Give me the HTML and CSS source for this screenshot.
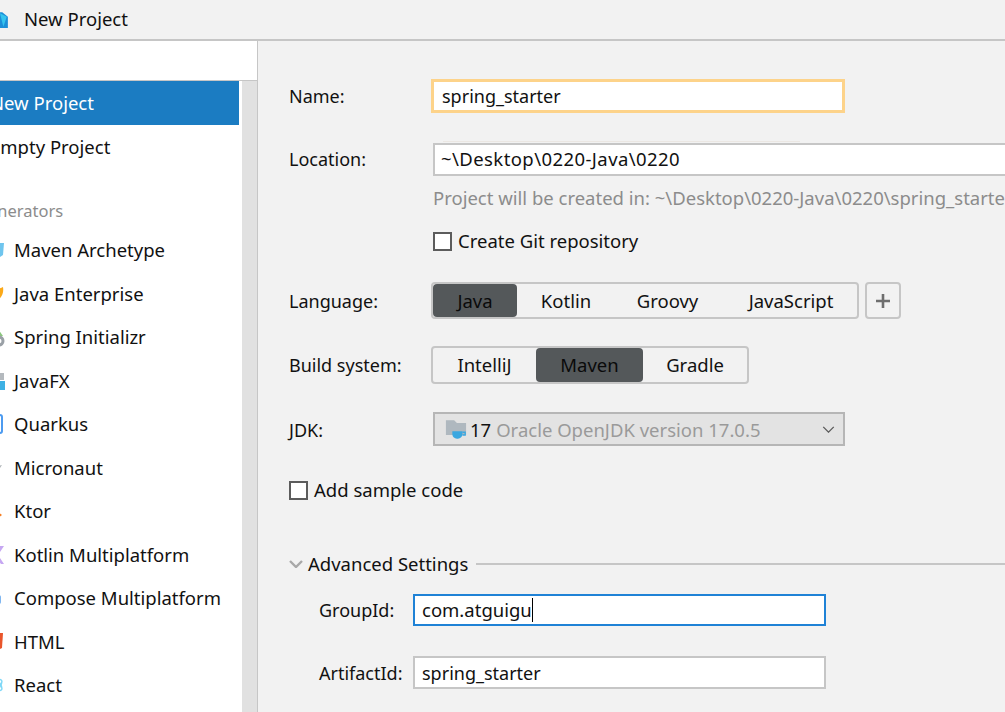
FILE: index.html
```html
<!DOCTYPE html>
<html lang="en">
<head>
    <meta charset="UTF-8">
    <meta name="viewport" content="width=device-width, initial-scale=1.0">
    <title>New Project</title>
    <link rel="stylesheet" href="styles.css">
</head>
<body>
    <header class="titlebar">
        <svg class="app-icon" viewBox="0 0 16 16"><path d="M1 1h9l5 4v10H3L1 12z" fill="#1c8fd8"/><path d="M8 2l6 3-3 9z" fill="#35c4ee"/></svg>
        <span>New Project</span>
    </header>
    <div class="dialog">
        <aside class="sidebar">
            <div class="search"></div>
            <div class="list-wrap">
                <ul class="list">
                    <li class="top selected">New Project</li>
                    <li class="top empty">Empty Project</li>
                    <li class="group">Generators</li>
                    <li class="item"><svg viewBox="0 0 16 16"><path d="M2 1h14l-1 12-3 2H3z" fill="#6fc5ee"/></svg>Maven Archetype</li>
                    <li class="item"><svg viewBox="0 0 16 16"><path d="M8 15C14 12 16 7 15 1c-4 2-8 2-9 7z" fill="#fba919"/></svg>Java Enterprise</li>
                    <li class="item"><svg viewBox="0 0 16 16"><path d="M10 0l5 7H8z" fill="#8ac77c"/><circle cx="11" cy="12" r="4" fill="none" stroke="#9aa0a6" stroke-width="3"/></svg>Spring Initializr</li>
                    <li class="item"><svg viewBox="0 0 16 16"><rect x="0" y="0" width="16" height="7" fill="#b4b9be"/><rect x="6" y="8" width="11" height="9" fill="#3db1e4"/></svg>JavaFX</li>
                    <li class="item"><svg viewBox="0 0 16 16"><rect x="4" y="-1" width="10" height="18" rx="2" fill="none" stroke="#4d9bf0" stroke-width="2"/></svg>Quarkus</li>
                    <li class="item"><svg viewBox="0 0 16 16"><path d="M0 8l14-3-6 9z" fill="#b0b4b8"/></svg>Micronaut</li>
                    <li class="item"><svg viewBox="0 0 16 16"><path d="M10 9l4 3-4 3-4-3z" fill="#f57c1f"/></svg>Ktor</li>
                    <li class="item"><svg viewBox="0 0 16 16"><path d="M16 -1L10 8l6 9h-3L6 8l6-9z" fill="#c6a7f2"/></svg>Kotlin Multiplatform</li>
                    <li class="item"><svg viewBox="0 0 16 16"><rect x="4" y="5" width="9" height="9" rx="2" fill="#7fb6f0"/></svg>Compose Multiplatform</li>
                    <li class="item"><svg viewBox="0 0 16 16"><path d="M2 -1h13l-1 15-6 3-6-3z" fill="#e9552b"/></svg>HTML</li>
                    <li class="item"><svg viewBox="0 0 16 16"><ellipse cx="10" cy="8" rx="6" ry="2.5" fill="none" stroke="#7fd8f7" stroke-width="1.5" transform="rotate(60 10 8)"/><ellipse cx="10" cy="8" rx="6" ry="2.5" fill="none" stroke="#7fd8f7" stroke-width="1.5" transform="rotate(-60 10 8)"/></svg>React</li>
                </ul>
                <div class="scroll-track"></div>
            </div>
        </aside>
        <main class="form">
            <div class="row row-name">
                <label class="field-label">Name:</label>
                <div class="input input-focus">spring_starter</div>
            </div>
            <div class="ghost-line"></div>
            <div class="row row-location">
                <label class="field-label">Location:</label>
                <div class="input input-location">~\Desktop\0220-Java\0220</div>
            </div>
            <p class="hint">Project will be created in: ~\Desktop\0220-Java\0220\spring_starter</p>
            <div class="check check-git"><span class="box"></span>Create Git repository</div>
            <div class="row row-language">
                <label class="field-label">Language:</label>
                <div class="seg seg-lang">
                    <span class="opt on w-java">Java</span>
                    <span class="opt w-kotlin">Kotlin</span>
                    <span class="opt w-groovy">Groovy</span>
                    <span class="opt w-js">JavaScript</span>
                </div>
                <button class="plus"><svg viewBox="0 0 16 16"><path d="M8 1v14M1 8h14" stroke="#6e6e6e" stroke-width="2.6"/></svg></button>
            </div>
            <div class="row row-build">
                <label class="field-label">Build system:</label>
                <div class="seg seg-build">
                    <span class="opt w-intellij">IntelliJ</span>
                    <span class="opt on w-maven">Maven</span>
                    <span class="opt w-gradle">Gradle</span>
                </div>
            </div>
            <div class="row row-jdk">
                <label class="field-label">JDK:</label>
                <div class="select">
                    <svg class="jdk-icon" viewBox="0 0 24 22"><path d="M1 1h9l3 3h10v13H1z" fill="#afb8bf"/><path d="M8 13h11v3c0 3-2 5-5 5h-1c-3 0-5-2-5-5z" fill="#3aa7e0"/><path d="M19 14h3v3h-3" fill="none" stroke="#3aa7e0" stroke-width="1.5"/></svg>
                    <span class="jdk-num">17</span>
                    <span class="jdk-name">Oracle OpenJDK version 17.0.5</span>
                    <svg class="caret" viewBox="0 0 14 8"><path d="M1 1l6 6 6-6" fill="none" stroke="#5a5a5a" stroke-width="1.5"/></svg>
                </div>
            </div>
            <div class="check check-sample"><span class="box"></span>Add sample code</div>
            <div class="advanced">
                <svg viewBox="0 0 14 8"><path d="M1 1l6 6 6-6" fill="none" stroke="#a8a8a8" stroke-width="2.4"/></svg>
                <span>Advanced Settings</span>
                <div class="rule"></div>
            </div>
            <div class="sub-row sub-group">
                <label class="sub-label">GroupId:</label>
                <div class="input input-sub input-active">com.atguigu<span class="cursor"></span></div>
            </div>
            <div class="sub-row sub-artifact">
                <label class="sub-label">ArtifactId:</label>
                <div class="input input-sub input-artifact">spring_starter</div>
            </div>
        </main>
    </div>
</body>
</html>
```

FILE: styles.css
```css
html, body {
    margin: 0;
    height: 100%;
    overflow: hidden;
}
body {
    width: 1005px;
    height: 712px;
    background-color: #f2f2f2;
    color: #111;
    font-family: "Noto Sans", "Open Sans", sans-serif;
    font-size: 18.5px;
    line-height: 24px;
}
.titlebar {
    height: 39px;
    display: flex;
    align-items: center;
    gap: 14px;
    margin-left: -10px;
    border-bottom: 2px solid #c6c6c6;
}
.titlebar span {
    padding-bottom: 2px;
}
.app-icon {
    width: 20px;
    height: 18px;
}
.dialog {
    display: flex;
    height: 671px;
}

/* left list */
.sidebar {
    width: 257px;
    flex: none;
    background-color: #fff;
    border-right: 1px solid #c6c6c6;
    overflow: hidden;
}
.search {
    height: 39px;
    border-bottom: 1px solid #c6c6c6;
}
.list-wrap {
    display: flex;
    height: 631px;
}
.list {
    list-style: none;
    margin: 0;
    padding: 0;
    width: 239px;
    flex: none;
}
.list li {
    height: 43.5px;
    display: flex;
    align-items: center;
    white-space: nowrap;
}
.top {
    text-indent: -10px;
}
.list .selected {
    height: 44px;
    background-color: #1b7cc2;
    color: #fff;
}
.list .empty {
    box-sizing: border-box;
    padding-top: 1px;
}
.list .group {
    height: 36px;
    margin-top: 24px;
    color: #8c8c8c;
    font-size: 16.5px;
    text-indent: -24px;
}
.list .item {
    margin-left: -12px;
    gap: 10px;
}
.item svg {
    width: 16px;
    height: 16px;
    flex: none;
    overflow: visible;
}
.scroll-track {
    flex: 1;
    margin-left: 3px;
    background-color: #e1e1e1;
}

/* right form */
.form {
    flex: 1;
    min-width: 0;
    padding-left: 31px;
    overflow: hidden;
}
.row {
    display: flex;
    align-items: center;
}
.field-label {
    width: 142px;
    flex: none;
    font-size: 18px;
}
.row-name {
    margin-top: 38px;
    height: 34px;
}
.ghost-line {
    width: 357px;
    height: 1px;
    margin: 28px 0 0 154px;
    background-color: #ebe7e3;
}
.row-location {
    margin-top: 1px;
    height: 33px;
}
.row-location .field-label {
    padding-bottom: 2px;
}
.input {
    height: 100%;
    box-sizing: border-box;
    display: flex;
    align-items: center;
    padding-left: 7px;
    background-color: #fff;
    border: 2px solid #c6c6c6;
    white-space: nowrap;
}
.input-focus {
    width: 414px;
    border: 3px solid #fdd38a;
    padding-left: 8px;
    font-size: 18px;
}
.input-location {
    width: 640px;
    flex: none;
    margin-left: 2px;
    padding: 0 0 2px 6px;
    letter-spacing: 0.42px;
}
.hint {
    margin: 10px 0 0 144px;
    height: 24px;
    color: #8c8c8c;
    white-space: nowrap;
}
.check {
    display: flex;
    align-items: center;
    gap: 6px;
    white-space: nowrap;
}
.box {
    box-sizing: border-box;
    width: 19px;
    height: 19px;
    background-color: #fff;
    border: 2px solid #5c5c5c;
}
.check-git {
    margin: 19px 0 0 144px;
    height: 24px;
}
.row-language {
    margin-top: 29px;
    height: 37px;
}
.seg {
    height: 100%;
    box-sizing: border-box;
    display: flex;
    border: 2px solid #c6c6c6;
    border-radius: 4px;
}
.opt {
    display: flex;
    align-items: center;
    justify-content: center;
}
.on {
    background-color: #54585a;
    border-radius: 4px;
    color: #0a0a0a;
}
.w-java { width: 84px; }
.w-kotlin { width: 98px; }
.w-groovy { width: 105px; }
.w-js { width: 137px; padding-left: 5px; box-sizing: border-box; }
.w-intellij { width: 103px; }
.w-maven { width: 107px; }
.w-gradle { width: 104px; }
.plus {
    width: 36px;
    height: 100%;
    margin-left: 6px;
    padding: 8px;
    box-sizing: border-box;
    background: none;
    border: 2px solid #c6c6c6;
    border-radius: 4px;
}
.plus svg {
    display: block;
    width: 16px;
    height: 16px;
}
.row-build {
    margin-top: 27px;
    height: 38px;
}
.row-jdk {
    margin-top: 28px;
    height: 34px;
}
.row-jdk .field-label {
    padding-top: 2px;
}
.select {
    width: 412px;
    height: 100%;
    margin-left: 2px;
    box-sizing: border-box;
    display: flex;
    align-items: center;
    padding: 1px 8px 0 10px;
    background-color: #e3e3e3;
    border: 2px solid #b6b6b6;
}
.jdk-icon {
    width: 22px;
    height: 21px;
    flex: none;
}
.jdk-num {
    margin-left: 3px;
}
.jdk-name {
    margin-left: 5px;
    color: #9a9a9a;
    white-space: nowrap;
}
.caret {
    width: 13px;
    height: 7px;
    margin-left: auto;
}
.check-sample {
    margin-top: 32px;
    height: 24px;
}
.advanced {
    margin-top: 50px;
    height: 24px;
    display: flex;
    align-items: center;
    white-space: nowrap;
}
.advanced svg {
    width: 14px;
    height: 8px;
    margin-right: 5px;
}
.rule {
    flex: 1;
    height: 2px;
    margin-left: 8px;
    background-color: #c6c6c6;
}
.sub-row {
    display: flex;
    align-items: center;
    margin-left: 30px;
}
.sub-label {
    width: 94px;
    flex: none;
    font-size: 18px;
}
.sub-group {
    margin-top: 18px;
    height: 32px;
}
.sub-artifact {
    margin-top: 30px;
    height: 33px;
}
.input-sub {
    width: 413px;
}
.input-artifact {
    font-size: 18px;
}
.input-active {
    border-color: #1f82d6;
}
.cursor {
    width: 1px;
    height: 24px;
    background-color: #000;
}
```
